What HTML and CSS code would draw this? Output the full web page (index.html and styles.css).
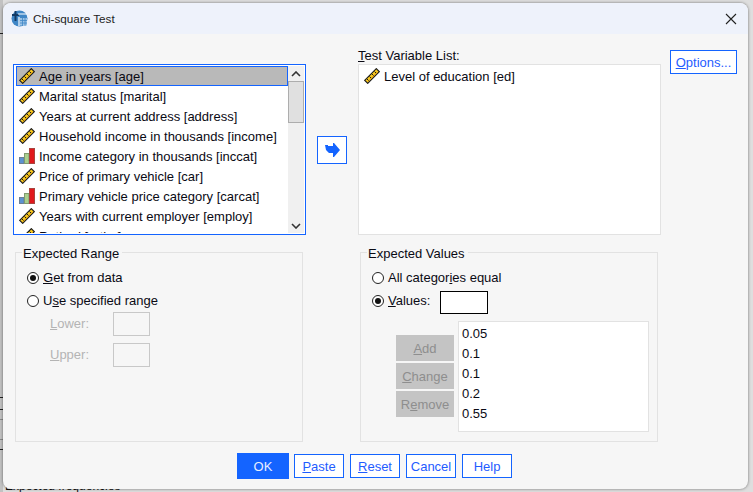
FILE: index.html
```html
<!DOCTYPE html>
<html lang="en">
<head>
    <meta charset="UTF-8">
    <title>Chi-square Test</title>
    <link rel="stylesheet" href="styles.css">
</head>
<body>
    <svg class="sprites" width="0" height="0">
        <symbol id="ruler" viewBox="0 0 16 16">
            <path d="M0.7 12.3 L12.3 0.7 L15.3 3.7 L3.7 15.3 Z" fill="#f7c91e" stroke="#1c1c1c" stroke-width="1.2"/>
            <path d="M3 11 L5 13 M5.5 8.5 L7 10 M8 6 L10 8 M10.5 3.5 L12 5" stroke="#1c1c1c" stroke-width="1"/>
            <path d="M4 13.5 L13.5 4" stroke="#e09a10" stroke-width="1"/>
        </symbol>
        <symbol id="bars" viewBox="0 0 16 16">
            <rect x="0.5" y="9.5" width="4.5" height="6" fill="#5b93d2" stroke="#6b7f95"/>
            <rect x="5.5" y="5.5" width="4.5" height="10" fill="#a9d08e" stroke="#7f9a70"/>
            <rect x="10.5" y="0.5" width="5" height="15" fill="#e0181c" stroke="#a8443f"/>
        </symbol>
    </svg>

    <!-- Lo que asoma por detras de la ventana -->
    <svg class="backdrop" width="3" height="492">
        <path d="M0 33.5 H3 M0 397.5 H3 M0 409.5 H3 M0 449.5 H3" stroke="#222"/>
        <path d="M0 419.5 H3 M0 439.5 H3" stroke="#888"/>
    </svg>
    <div class="behind">Expected frequencies</div>

    <!-- Dialog -->
    <div class="dialog">
        <div class="titlebar">
            <svg class="app-icon" width="17" height="17" viewBox="0 0 17 17">
                <circle cx="8.5" cy="8.5" r="8" fill="#3f86c6"/>
                <path d="M1 5 H8 M4.5 1 V11" stroke="#123a66" stroke-width="2"/>
                <path d="M7 4 H16 M8 7 V16" stroke="#fff" stroke-width="1.2"/>
                <rect x="9" y="8" width="7" height="7.5" fill="#9cc3e6"/>
                <path d="M9 10.5 H16 M9 13 H16 M11.5 8 V16 M14 8 V16" stroke="#3f86c6" stroke-width="0.8"/>
            </svg>
            <span class="title">Chi-square Test</span>
            <svg class="close" width="12" height="12" viewBox="0 0 12 12">
                <path d="M1 1 L11 11 M11 1 L1 11" stroke="#222" stroke-width="1.1"/>
            </svg>
        </div>

        <div class="top-row">
            <div class="source-list">
                <div class="rows">
                    <div class="row selected"><svg class="var-icon"><use href="#ruler"/></svg>Age in years [age]</div>
                    <div class="row"><svg class="var-icon"><use href="#ruler"/></svg>Marital status [marital]</div>
                    <div class="row"><svg class="var-icon"><use href="#ruler"/></svg>Years at current address [address]</div>
                    <div class="row"><svg class="var-icon"><use href="#ruler"/></svg>Household income in thousands [income]</div>
                    <div class="row"><svg class="var-icon"><use href="#bars"/></svg>Income category in thousands [inccat]</div>
                    <div class="row"><svg class="var-icon"><use href="#ruler"/></svg>Price of primary vehicle [car]</div>
                    <div class="row"><svg class="var-icon"><use href="#bars"/></svg>Primary vehicle price category [carcat]</div>
                    <div class="row"><svg class="var-icon"><use href="#ruler"/></svg>Years with current employer [employ]</div>
                    <div class="row"><svg class="var-icon"><use href="#ruler"/></svg>Retired [retire]</div>
                </div>
                <div class="scrollbar">
                    <div class="scroll-btn">
                        <svg width="10" height="6" viewBox="0 0 10 6"><path d="M1 5 L5 1 L9 5" fill="none" stroke="#333" stroke-width="1.6"/></svg>
                    </div>
                    <div class="scroll-thumb"></div>
                    <div class="scroll-track"></div>
                    <div class="scroll-btn">
                        <svg width="10" height="6" viewBox="0 0 10 6"><path d="M1 1 L5 5 L9 1" fill="none" stroke="#333" stroke-width="1.6"/></svg>
                    </div>
                </div>
            </div>

            <div class="transfer">
                <svg width="15" height="14" viewBox="0 0 15 14"><path d="M0 2 H3 V3 H8 V0 H9 L15 7 L9 14 H8 V10 H4 L1 7 Z" fill="#1464ff"/></svg>
            </div>

            <div class="target">
                <div class="target-label"><u>T</u>est Variable List:</div>
                <div class="target-list">
                    <div class="row"><svg class="var-icon"><use href="#ruler"/></svg>Level of education [ed]</div>
                </div>
            </div>

            <button class="btn options"><u>O</u>ptions...</button>
        </div>

        <div class="mid-row">
            <fieldset class="group range">
                <legend>Expected Range</legend>
                <label class="radio"><span class="dot on"></span><span><u>G</u>et from data</span></label>
                <label class="radio"><span class="dot"></span><span>U<u>s</u>e specified range</span></label>
                <div class="bound"><span><u>L</u>ower:</span><span class="small-input"></span></div>
                <div class="bound"><span><u>U</u>pper:</span><span class="small-input"></span></div>
            </fieldset>

            <fieldset class="group values">
                <legend>Expected Values</legend>
                <label class="radio"><span class="dot"></span><span>All categor<u>i</u>es equal</span></label>
                <label class="radio"><span class="dot on"></span><span class="values-label"><u>V</u>alues:</span><span class="value-input"></span></label>
                <div class="value-editor">
                    <div class="value-btns">
                        <button class="btn-off"><u>A</u>dd</button>
                        <button class="btn-off"><u>C</u>hange</button>
                        <button class="btn-off">R<u>e</u>move</button>
                    </div>
                    <div class="value-list">
                        <div>0.05</div>
                        <div>0.1</div>
                        <div>0.1</div>
                        <div>0.2</div>
                        <div>0.55</div>
                    </div>
                </div>
            </fieldset>
        </div>

        <div class="button-row">
            <button class="btn ok">OK</button>
            <button class="btn"><u>P</u>aste</button>
            <button class="btn"><u>R</u>eset</button>
            <button class="btn">Cancel</button>
            <button class="btn">Help</button>
        </div>
    </div>
</body>
</html>
```

FILE: styles.css
```css
* {
    box-sizing: border-box;
}
html, body {
    height: 100%;
}
body {
    margin: 0;
    overflow: hidden;
    position: relative;
    background: linear-gradient(to right, #c2c2c2 3px, #dedede 3px);
    font-family: "Liberation Sans", Arial, sans-serif;
    font-size: 13px;
    color: #0a0a14;
}
u {
    text-underline-offset: 1px;
}
.sprites, .backdrop {
    position: absolute;
    left: 0;
    top: 0;
}
.behind {
    position: absolute;
    left: 5px;
    top: 479px;
    font-size: 12px;
    color: #111;
}

/* Dialog window */
.dialog {
    position: absolute;
    left: 3px;
    top: 3px;
    width: 745px;
    height: 486px;
    background: #f6f6f6;
    border-radius: 8px;
    box-shadow: 0 0 3px rgba(0, 0, 0, 0.5);
    overflow: hidden;
}
.titlebar {
    display: flex;
    align-items: center;
    height: 31px;
    padding: 0 11px 0 8px;
    background: #eef2fb;
}
.title {
    flex: 1;
    margin-left: 5px;
    font-size: 11.7px;
    color: #222;
}

/* Top area */
.top-row {
    display: flex;
    height: 205px;
}
.source-list {
    display: flex;
    width: 293px;
    height: 171px;
    margin: 30px 0 0 10px;
    padding: 1px;
    border: 1px solid #1464ff;
    background: #fff;
}
.rows {
    flex: 1;
    height: 100%;
    padding-left: 1px;
    overflow: hidden;
}
.row {
    display: flex;
    align-items: center;
    height: 20px;
    padding-left: 3px;
    white-space: nowrap;
}
.row.selected {
    background: #b9b9b9;
    outline: 1px solid #1464ff;
    outline-offset: -1px;
}
.var-icon {
    width: 16px;
    height: 16px;
    margin-right: 4px;
    flex: none;
}
.scrollbar {
    display: flex;
    flex-direction: column;
    width: 16px;
    background: #f0f0f0;
}
.scroll-btn {
    display: flex;
    align-items: center;
    justify-content: center;
    height: 15px;
}
.scroll-thumb {
    height: 42px;
    background: #e0e0e0;
    border: 1px solid #adadad;
}
.scroll-track {
    flex: 1;
}
.transfer {
    display: flex;
    align-items: center;
    justify-content: center;
    width: 30px;
    height: 28px;
    margin: 102px 0 0 11px;
    border: 1px solid #1464ff;
    background: #fff;
}
.target {
    width: 303px;
    margin-left: 11px;
}
.target-label {
    height: 16px;
    margin-top: 14px;
    line-height: 16px;
}
.target-list {
    height: 171px;
    padding: 1px 5px;
    background: #fff;
    border: 1px solid #e2e2e2;
}
.target-list .row {
    padding-left: 0;
}
.btn {
    height: 24px;
    width: 50px;
    padding: 0;
    background: #fff;
    color: #1f5cff;
    border: 1px solid #1464ff;
    font: inherit;
}
.options {
    width: 67px;
    margin: 16px 0 0 9px;
}

/* Group boxes */
.mid-row {
    display: flex;
    margin-top: 3px;
}
.group {
    height: 200px;
    margin: 0;
    padding: 4px 0 0 11px;
    border: 1px solid #e2e2e2;
}
.group legend {
    padding: 4px 3px 0 1px;
    margin-left: -5px;
    line-height: 16px;
}
.range {
    width: 288px;
    margin-left: 12px;
}
.values {
    width: 298px;
    margin-left: 57px;
}
.radio {
    display: flex;
    align-items: center;
    height: 23px;
}
.dot {
    position: relative;
    width: 12px;
    height: 12px;
    margin-right: 4px;
    border: 1px solid #222;
    border-radius: 50%;
    background: #fff;
}
.dot.on::after {
    content: "";
    position: absolute;
    left: 2px;
    top: 2px;
    width: 6px;
    height: 6px;
    border-radius: 50%;
    background: #111;
}
.bound {
    display: flex;
    align-items: center;
    height: 24px;
    margin-bottom: 7px;
    padding-left: 23px;
    color: #b4b4b4;
}
.bound span:first-child {
    width: 63px;
    margin-top: -2px;
}
.small-input {
    width: 37px;
    height: 24px;
    border: 1px solid #c8c8c8;
}
.values-label {
    width: 52px;
}
.value-input {
    width: 48px;
    height: 23px;
    margin-top: 3px;
    background: #fff;
    border: 1px solid #000;
}
.value-editor {
    display: flex;
    margin-top: 9px;
    padding-left: 24px;
}
.value-btns {
    display: flex;
    flex-direction: column;
    gap: 2px;
    width: 58px;
    margin-top: 14px;
}
.btn-off {
    height: 26px;
    padding: 0;
    background: #c4c4c4;
    color: #8e8e8e;
    border: none;
    font: inherit;
}
.value-list {
    width: 191px;
    height: 111px;
    margin-left: 4px;
    padding: 2px 3px;
    background: #fff;
    border: 1px solid #e2e2e2;
}
.value-list div {
    height: 20px;
    line-height: 20px;
}

/* Bottom buttons */
.button-row {
    display: flex;
    align-items: center;
    gap: 6px;
    margin-top: 11px;
    padding-left: 234px;
}
.btn.ok {
    width: 52px;
    height: 26px;
    margin-right: -1px;
    background: #1464ff;
    color: #e8efff;
    border: none;
}
```
